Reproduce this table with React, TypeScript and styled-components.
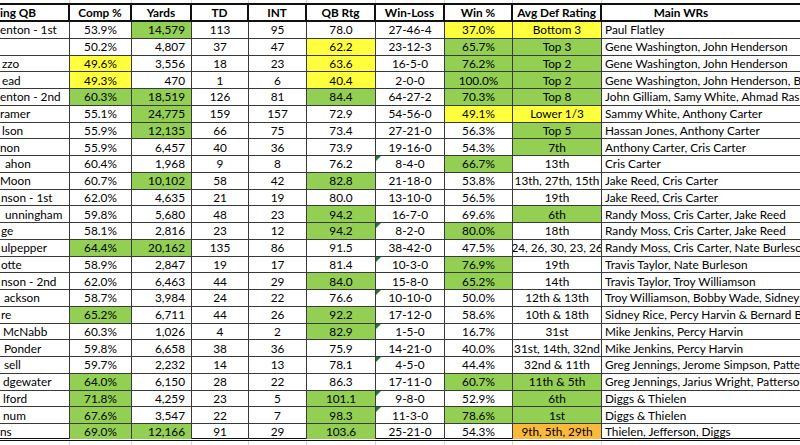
import React from "react";
import styled, { createGlobalStyle, css } from "styled-components";

const GlobalStyle = createGlobalStyle`
  html, body { margin: 0; padding: 0; background: #ffffff; }
  * { box-sizing: border-box; }
`;

type Fill = "g" | "y" | "o" | undefined;

const fills: Record<string, string> = {
  g: "#92cf52",
  y: "#ffff3d",
  o: "#fbb83a",
};

const COLS = "70px 62px 60px 57px 58px 69px 69px 68px 89px 158px";

const Sheet = styled.div`
  width: 800px;
  height: 445px;
  overflow: hidden;
  background: #ffffff;
  font-family: Lato, "Liberation Sans", sans-serif;
  font-size: 11.8px;
  color: #000;
`;

const GhostRow = styled.div<{ $h: number }>`
  display: grid;
  grid-template-columns: ${COLS};
  height: ${(p) => p.$h}px;
`;

const GhostCell = styled.div`
  border-right: 1px solid #d6d6d6;
`;

const HeaderRow = styled.div`
  display: grid;
  grid-template-columns: ${COLS};
  height: 19px;
  border-top: 2px solid #111;
  border-bottom: 2px solid #111;
`;

const HeadCell = styled.div<{ $left?: boolean; $open?: boolean }>`
  border-right: ${(p) => (p.$open ? "none" : "2px solid #111")};
  font-weight: 700;
  display: flex;
  align-items: center;
  justify-content: ${(p) => (p.$left ? "flex-start" : "center")};
  white-space: nowrap;
  overflow: hidden;
  line-height: 15px;
`;

const DataRow = styled.div<{ $last?: boolean }>`
  display: grid;
  grid-template-columns: ${COLS};
  height: 16.76px;
  border-bottom: 1px solid #3a3a3a;
  ${(p) =>
    p.$last &&
    css`
      border-bottom: 3px double #111;
    `}
`;

const Cell = styled.div<{ $fill?: Fill; $align?: "left" | "center" | "right"; $tri?: boolean }>`
  position: relative;
  border-right: 1px solid #3a3a3a;
  background: ${(p) => (p.$fill ? fills[p.$fill] : "transparent")};
  display: flex;
  align-items: center;
  justify-content: ${(p) =>
    p.$align === "left" ? "flex-start" : p.$align === "right" ? "flex-end" : "center"};
  padding: ${(p) => (p.$align === "right" ? "0 6px 0 0" : p.$align === "left" ? "0 0 0 3px" : "0")};
  white-space: nowrap;
  overflow: hidden;
  line-height: 15px;
  ${(p) =>
    p.$tri &&
    css`
      &::before {
        content: "";
        position: absolute;
        top: 0;
        left: 0;
        border-top: 5px solid #1f7a3a;
        border-right: 5px solid transparent;
      }
    `}
`;

const NameCell = styled.div<{ $indent: number }>`
  border-right: 1px solid #3a3a3a;
  display: flex;
  align-items: center;
  justify-content: flex-start;
  padding: 0 0 0 ${(p) => p.$indent}px;
  white-space: nowrap;
  overflow: hidden;
  line-height: 15px;
`;

const WrCell = styled(Cell)`
  border-right: none;
  overflow: visible;
`;

type Row = {
  name: string;
  ind: number;
  comp: string;
  compF?: Fill;
  yds: string;
  ydsF?: Fill;
  td: string;
  int: string;
  rtg: string;
  rtgF?: Fill;
  wl: string;
  tri?: boolean;
  win: string;
  winF?: Fill;
  def: string;
  defF?: Fill;
  wrs: string;
};

const rows: Row[] = [
  { name: "enton - 1st", ind: 0, comp: "53.9%", yds: "14,579", ydsF: "g", td: "113", int: "95", rtg: "78.0", wl: "27-46-4", win: "37.0%", winF: "y", def: "Bottom 3", defF: "y", wrs: "Paul Flatley" },
  { name: "", ind: 0, comp: "50.2%", yds: "4,807", td: "37", int: "47", rtg: "62.2", rtgF: "y", wl: "23-12-3", win: "65.7%", winF: "g", def: "Top 3", defF: "g", wrs: "Gene Washington, John Henderson" },
  { name: "zzo", ind: 2, comp: "49.6%", compF: "y", yds: "3,556", td: "18", int: "23", rtg: "63.6", rtgF: "y", wl: "16-5-0", win: "76.2%", winF: "g", def: "Top 2", defF: "g", wrs: "Gene Washington, John Henderson" },
  { name: "ead", ind: 2, comp: "49.3%", compF: "y", yds: "470", td: "1", int: "6", rtg: "40.4", rtgF: "y", wl: "2-0-0", win: "100.0%", winF: "g", def: "Top 2", defF: "g", wrs: "Gene Washington, John Henderson, Bob Grim" },
  { name: "enton - 2nd", ind: 0, comp: "60.3%", compF: "g", yds: "18,519", ydsF: "g", td: "126", int: "81", rtg: "84.4", rtgF: "g", wl: "64-27-2", win: "70.3%", winF: "g", def: "Top 8", defF: "g", wrs: "John Gilliam, Samy White, Ahmad Rashad" },
  { name: "ramer", ind: 0, comp: "55.1%", yds: "24,775", ydsF: "g", td: "159", int: "157", rtg: "72.9", wl: "54-56-0", win: "49.1%", winF: "y", def: "Lower 1/3", defF: "y", wrs: "Sammy White, Anthony Carter" },
  { name: "lson", ind: 2, comp: "55.9%", yds: "12,135", ydsF: "g", td: "66", int: "75", rtg: "73.4", wl: "27-21-0", win: "56.3%", def: "Top 5", defF: "g", wrs: "Hassan Jones, Anthony Carter" },
  { name: "non", ind: 0, comp: "55.9%", yds: "6,457", td: "40", int: "36", rtg: "73.9", wl: "19-16-0", win: "54.3%", def: "7th", defF: "g", wrs: "Anthony Carter, Cris Carter" },
  { name: "ahon", ind: 5, comp: "60.4%", yds: "1,968", td: "9", int: "8", rtg: "76.2", wl: "8-4-0", tri: true, win: "66.7%", winF: "g", def: "13th", wrs: "Cris Carter" },
  { name: "Moon", ind: 0, comp: "60.7%", yds: "10,102", ydsF: "g", td: "58", int: "42", rtg: "82.8", rtgF: "g", wl: "21-18-0", win: "53.8%", def: "13th, 27th, 15th", wrs: "Jake Reed, Cris Carter" },
  { name: "nson - 1st", ind: 1, comp: "62.0%", yds: "4,635", td: "21", int: "19", rtg: "80.0", wl: "13-10-0", win: "56.5%", def: "19th", wrs: "Jake Reed, Cris Carter" },
  { name: "unningham", ind: 5, comp: "59.8%", yds: "5,680", td: "48", int: "23", rtg: "94.2", rtgF: "g", wl: "16-7-0", win: "69.6%", def: "6th", defF: "g", wrs: "Randy Moss, Cris Carter, Jake Reed" },
  { name: "ge", ind: 1, comp: "58.1%", yds: "2,816", td: "23", int: "12", rtg: "94.2", rtgF: "g", wl: "8-2-0", tri: true, win: "80.0%", winF: "g", def: "18th", wrs: "Randy Moss, Cris Carter, Jake Reed" },
  { name: "ulpepper", ind: 1, comp: "64.4%", compF: "g", yds: "20,162", ydsF: "g", td: "135", int: "86", rtg: "91.5", wl: "38-42-0", win: "47.5%", def: "24, 26, 30, 23, 26", wrs: "Randy Moss, Cris Carter, Nate Burleson" },
  { name: "otte", ind: 1, comp: "58.9%", yds: "2,847", td: "19", int: "17", rtg: "81.4", wl: "10-3-0", tri: true, win: "76.9%", winF: "g", def: "19th", wrs: "Travis Taylor, Nate Burleson" },
  { name: "nson - 2nd", ind: 1, comp: "62.0%", yds: "6,463", td: "44", int: "29", rtg: "84.0", rtgF: "g", wl: "15-8-0", win: "65.2%", winF: "g", def: "14th", wrs: "Travis Taylor, Troy Williamson" },
  { name: "ackson", ind: 4, comp: "58.7%", yds: "3,984", td: "24", int: "22", rtg: "76.6", wl: "10-10-0", tri: true, win: "50.0%", def: "12th & 13th", wrs: "Troy Williamson, Bobby Wade, Sidney Rice" },
  { name: "re", ind: 1, comp: "65.2%", compF: "g", yds: "6,711", td: "44", int: "26", rtg: "92.2", rtgF: "g", wl: "17-12-0", win: "58.6%", def: "10th & 18th", wrs: "Sidney Rice, Percy Harvin & Bernard Berrian" },
  { name: "McNabb", ind: 3, comp: "60.3%", yds: "1,026", td: "4", int: "2", rtg: "82.9", rtgF: "g", wl: "1-5-0", tri: true, win: "16.7%", def: "31st", wrs: "Mike Jenkins, Percy Harvin" },
  { name: "Ponder", ind: 4, comp: "59.8%", yds: "6,658", td: "38", int: "36", rtg: "75.9", wl: "14-21-0", win: "40.0%", def: "31st, 14th, 32nd", wrs: "Mike Jenkins, Percy Harvin" },
  { name: "sell", ind: 4, comp: "59.7%", yds: "2,232", td: "14", int: "13", rtg: "78.1", wl: "4-5-0", tri: true, win: "44.4%", def: "32nd & 11th", wrs: "Greg Jennings, Jerome Simpson, Patterson" },
  { name: "dgewater", ind: 3, comp: "64.0%", compF: "g", yds: "6,150", td: "28", int: "22", rtg: "86.3", wl: "17-11-0", win: "60.7%", winF: "g", def: "11th & 5th", defF: "g", wrs: "Greg Jennings, Jarius Wright, Patterson" },
  { name: "lford", ind: 3, comp: "71.8%", compF: "g", yds: "4,259", td: "23", int: "5", rtg: "101.1", rtgF: "g", wl: "9-8-0", tri: true, win: "52.9%", def: "6th", defF: "g", wrs: "Diggs & Thielen" },
  { name: "num", ind: 3, comp: "67.6%", compF: "g", yds: "3,547", td: "22", int: "7", rtg: "98.3", rtgF: "g", wl: "11-3-0", tri: true, win: "78.6%", winF: "g", def: "1st", defF: "g", wrs: "Diggs & Thielen" },
  { name: "ns", ind: 0, comp: "69.0%", compF: "g", yds: "12,166", ydsF: "g", td: "91", int: "29", rtg: "103.6", rtgF: "g", wl: "25-21-0", win: "54.3%", def: "9th, 5th, 29th", defF: "o", wrs: "Thielen, Jefferson, Diggs" },
];

const headers = ["ing QB", "Comp %", "Yards", "TD", "INT", "QB Rtg", "Win-Loss", "Win %", "Avg Def Rating", "Main WRs"];

const Ghost = ({ h }: { h: number }) => (
  <GhostRow $h={h}>
    {headers.slice(0, 9).map((_, i) => (
      <GhostCell key={i} />
    ))}
  </GhostRow>
);

export default function App() {
  return (
    <>
      <GlobalStyle />
      <Sheet>
        <Ghost h={3} />
        <HeaderRow>
          {headers.map((h, i) => (
            <HeadCell key={h} $left={i === 0} $open={i === headers.length - 1}>
              {h}
            </HeadCell>
          ))}
        </HeaderRow>
        {rows.map((r, i) => (
          <DataRow key={i} $last={i === rows.length - 1}>
            <NameCell $indent={r.ind}>{r.name}</NameCell>
            <Cell $fill={r.compF}>{r.comp}</Cell>
            <Cell $fill={r.ydsF} $align="right">{r.yds}</Cell>
            <Cell>{r.td}</Cell>
            <Cell>{r.int}</Cell>
            <Cell $fill={r.rtgF}>{r.rtg}</Cell>
            <Cell $tri={r.tri}>{r.wl}</Cell>
            <Cell $fill={r.winF}>{r.win}</Cell>
            <Cell $fill={r.defF}>{r.def}</Cell>
            <WrCell $align="left">{r.wrs}</WrCell>
          </DataRow>
        ))}
        <Ghost h={10} />
      </Sheet>
    </>
  );
}
